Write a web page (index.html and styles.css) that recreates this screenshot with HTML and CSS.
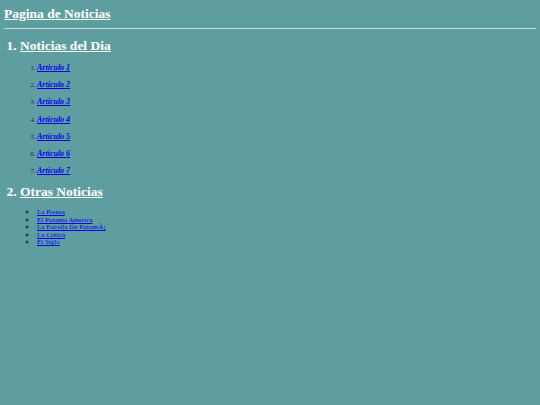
FILE: index.html
```html
<!DOCTYPE html>
<html lang="es">
<head>
  <meta charset="UTF-8">
  <title>Pagina de Noticias</title>
  <link rel="stylesheet" href="styles.css">
</head>
<body>
  <header>
    <a href="#" class="site-title">Pagina de Noticias</a>
  </header>
  <hr>

  <ol class="sections">
    <li>
      <a href="#" class="section-title">Noticias del Dia</a>
      <ol class="articles">
        <li><a href="#">Articulo 1</a></li>
        <li><a href="#">Articulo 2</a></li>
        <li><a href="#">Articulo 3</a></li>
        <li><a href="#">Articulo 4</a></li>
        <li><a href="#">Articulo 5</a></li>
        <li><a href="#">Articulo 6</a></li>
        <li><a href="#">Articulo 7</a></li>
      </ol>
    </li>
    <li>
      <a href="#" class="section-title">Otras Noticias</a>
      <ul class="papers">
        <li><a href="#">La Prensa</a></li>
        <li><a href="#">El Panama America</a></li>
        <li><a href="#">La Estrella De PanamÃ¡</a></li>
        <li><a href="#">La Critica</a></li>
        <li><a href="#">El Siglo</a></li>
      </ul>
    </li>
  </ol>
</body>
</html>
```

FILE: styles.css
```css
body {
  margin: 0;
  padding: 4px;
  font-family: 'Liberation Serif', serif;
  background-color: #5f9ea0;
  color: #222;
}
header {
  line-height: 17px;
}
.site-title {
  font-size: 13.5px;
  font-weight: bold;
  color: #fff;
}
hr {
  margin: 6px 0 0 0;
  border: none;
  border-top: 1px solid #c6dcdc;
  height: 0;
}
.sections {
  margin: 9px 0 0 0;
  padding-left: 16px;
  font-size: 13.5px;
  font-weight: bold;
  color: #fff;
  line-height: 16px;
}
.section-title {
  color: #fff;
}
.articles {
  margin: 5px 0 5px 0;
  padding-left: 17px;
  font-size: 6.5px;
  font-style: italic;
  font-weight: normal;
  color: #222;
  line-height: 17px;
}
.articles li {
  height: 17.2px;
}
.articles a {
  font-size: 8px;
  font-weight: bold;
  color: #0000ee;
}
.papers {
  margin: 9px 0 0 0;
  padding-left: 17px;
  font-size: 7px;
  font-weight: normal;
  color: #222;
  line-height: 7.5px;
}
.papers li {
  height: 7.5px;
}
.papers a {
  color: #0000ee;
}
```
